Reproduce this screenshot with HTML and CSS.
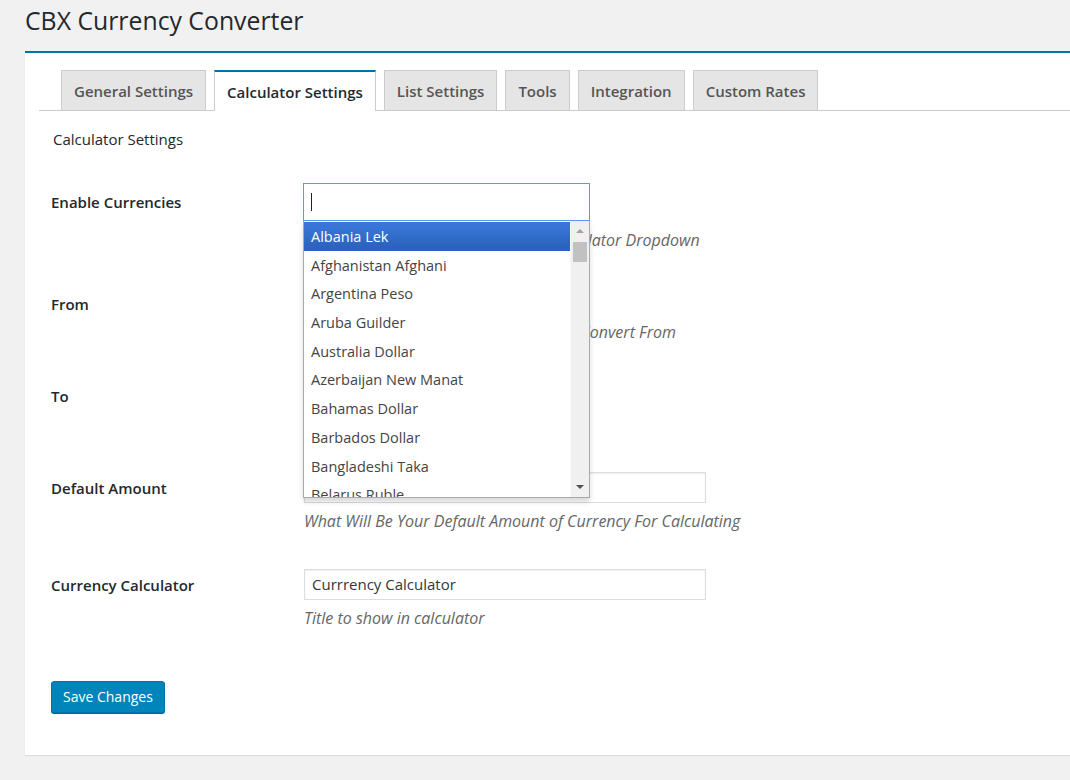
FILE: index.html
```html
<!DOCTYPE html>
<html>
<head>
<meta charset="utf-8">
<title>CBX Currency Converter</title>
<link rel="stylesheet" href="styles.css">
</head>
<body>
<div class="wrap">
  <h1 class="page-title">CBX Currency Converter</h1>
  <div class="panel">
    <nav class="tabs">
      <a class="tab">General Settings</a>
      <a class="tab tab-active">Calculator Settings</a>
      <a class="tab">List Settings</a>
      <a class="tab">Tools</a>
      <a class="tab">Integration</a>
      <a class="tab">Custom Rates</a>
    </nav>
    <div class="tab-body">
      <h2 class="section-title">Calculator Settings</h2>
      <div class="form">
        <div class="row row-enable">
          <div class="label label-enable">Enable Currencies</div>
          <div class="field">
            <div class="chosen">
              <div class="chosen-search"><span class="caret"></span></div>
              <div class="chosen-drop">
                <ul class="results">
                  <li class="result result-hl">Albania Lek</li>
                  <li class="result">Afghanistan Afghani</li>
                  <li class="result">Argentina Peso</li>
                  <li class="result">Aruba Guilder</li>
                  <li class="result">Australia Dollar</li>
                  <li class="result">Azerbaijan New Manat</li>
                  <li class="result">Bahamas Dollar</li>
                  <li class="result">Barbados Dollar</li>
                  <li class="result">Bangladeshi Taka</li>
                  <li class="result">Belarus Ruble</li>
                </ul>
                <div class="scrollbar">
                  <span class="arrow arrow-up"></span>
                  <span class="thumb"></span>
                  <span class="track"></span>
                  <span class="arrow arrow-down"></span>
                </div>
              </div>
            </div>
            <p class="desc desc-enable">Currencies That Will Be Enabled in Calculator Dropdown</p>
          </div>
        </div>
        <div class="row row-from">
          <div class="label label-select">From</div>
          <div class="field">
            <div class="select"></div>
            <p class="desc desc-select">Select the Currency Which You Want to Convert From</p>
          </div>
        </div>
        <div class="row row-to">
          <div class="label label-select">To</div>
          <div class="field">
            <div class="select"></div>
          </div>
        </div>
        <div class="row">
          <div class="label label-input">Default Amount</div>
          <div class="field">
            <div class="text-input"></div>
            <p class="desc">What Will Be Your Default Amount of Currency For Calculating</p>
          </div>
        </div>
        <div class="row">
          <div class="label label-input">Currency Calculator</div>
          <div class="field">
            <div class="text-input">Currrency Calculator</div>
            <p class="desc">Title to show in calculator</p>
          </div>
        </div>
      </div>
      <div class="submit">
        <button class="button-primary" type="button">Save Changes</button>
      </div>
    </div>
  </div>
</div>
</body>
</html>
```

FILE: styles.css
```css
html, body {
  margin: 0;
  padding: 0;
}
body {
  background: #f1f1f1;
  font-family: "Open Sans", "Noto Sans", "Liberation Sans", sans-serif;
  color: #23282d;
  overflow: hidden;
  height: 780px;
}
.wrap {
  margin-left: 25px;
  margin-right: -20px;
}
.page-title {
  margin: 0;
  padding: 5px 0 0 0;
  height: 51px;
  box-sizing: border-box;
  font-size: 24.8px;
  font-weight: 400;
  line-height: 30px;
  color: #23282d;
}
.panel {
  background: #fff;
  border-top: 2px solid #0073aa;
  box-shadow: 0 1px 1px rgba(0,0,0,0.08);
  height: 704px;
  box-sizing: border-box;
  padding-top: 17px;
}
.tabs {
  display: flex;
  gap: 8px;
  margin-left: 14px;
  padding-left: 22px;
  border-bottom: 1px solid #ccc;
  height: 41px;
  box-sizing: border-box;
}
.tab {
  display: flex;
  align-items: center;
  height: 40px;
  box-sizing: border-box;
  padding: 0 12px;
  background: #e5e5e5;
  border: 1px solid #ccc;
  border-bottom: none;
  font-size: 15px;
  font-weight: 600;
  color: #555;
}
.tab-active {
  background: #fff;
  border-top: 2px solid #0073aa;
  color: #23282d;
  height: 41px;
  margin-bottom: -1px;
  padding-top: 1px;
}
.tab-body {
  padding-left: 26px;
}
.section-title {
  margin: 0;
  padding-top: 17px;
  padding-left: 2px;
  font-size: 15px;
  font-weight: 400;
  line-height: 22px;
  color: #23282d;
}
.form {
  margin-top: 13px;
}
.row {
  display: flex;
  padding: 20px 0 18px 0;
}
.row-enable {
  padding-bottom: 20px;
}
.row-from {
  padding-bottom: 20px;
}
.row-to {
  padding-bottom: 42px;
}
.label {
  width: 253px;
  flex: none;
  font-size: 15px;
  font-weight: 600;
  line-height: 20px;
  color: #23282d;
}
.label-enable { padding-top: 9px; }
.label-select { padding-top: 4px; }
.label-input { padding-top: 6px; }
.field {
  width: 402px;
  position: relative;
}
.desc {
  margin: 8px 0 0 0;
  font-size: 16px;
  font-style: italic;
  line-height: 20px;
  color: #666;
  white-space: nowrap;
}
.desc-enable {
  margin-top: 9px;
}
.desc-select {
  margin-top: 4px;
}
.chosen {
  position: relative;
  width: 287px;
  margin-left: -1px;
  z-index: 5;
}
.chosen-search {
  height: 38px;
  box-sizing: border-box;
  border: 1px solid #5897fb;
  background: #fff;
  display: flex;
  align-items: center;
  padding-left: 7px;
}
.caret {
  display: block;
  width: 1px;
  height: 18px;
  background: #222;
}
.chosen-drop {
  position: absolute;
  top: 38px;
  left: 0;
  width: 287px;
  height: 277px;
  box-sizing: border-box;
  border: 1px solid #aaa;
  border-top: 0;
  background: #fff;
  box-shadow: 0 4px 5px rgba(0,0,0,0.15);
  display: flex;
  overflow: hidden;
}
.results {
  list-style: none;
  margin: 0;
  padding: 1px 0 0 0;
  flex: 1;
  overflow: hidden;
}
.result {
  height: 28.7px;
  box-sizing: border-box;
  padding-top: 2px;
  line-height: 26.7px;
  padding-left: 7px;
  font-size: 14.5px;
  color: #444;
  white-space: nowrap;
}
.result-hl {
  background: linear-gradient(#3875d7 20%, #2a62bc 90%);
  color: #fff;
}
.scrollbar {
  width: 18px;
  flex: none;
  background: #f0f0f0;
  display: flex;
  flex-direction: column;
  align-items: center;
  border-left: 1px solid #f7f7f7;
}
.arrow {
  width: 0;
  height: 0;
  border-left: 4px solid transparent;
  border-right: 4px solid transparent;
}
.arrow-up {
  margin-top: 8px;
  border-bottom: 4px solid #a3a3a3;
}
.arrow-down {
  margin-bottom: 8px;
  border-top: 4px solid #505050;
}
.thumb {
  margin-top: 9px;
  width: 14px;
  height: 20px;
  background: #c1c1c1;
}
.track {
  flex: 1;
}
.select {
  width: 286px;
  height: 28px;
  box-sizing: border-box;
  border: 1px solid #ddd;
}
.text-input {
  height: 31px;
  box-sizing: border-box;
  border: 1px solid #ddd;
  box-shadow: inset 0 1px 2px rgba(0,0,0,0.07);
  font-size: 15px;
  line-height: 29px;
  padding-left: 7px;
  color: #32373c;
}
.submit {
  padding-top: 35px;
}
.button-primary {
  height: 32px;
  padding: 0 11px;
  background: #0085ba;
  border: 1px solid #0073aa;
  border-radius: 3px;
  box-shadow: 0 1px 0 #006799;
  color: #fff;
  font-family: "Open Sans", "Noto Sans", "Liberation Sans", sans-serif;
  font-size: 14px;
  line-height: 30px;
}
```
